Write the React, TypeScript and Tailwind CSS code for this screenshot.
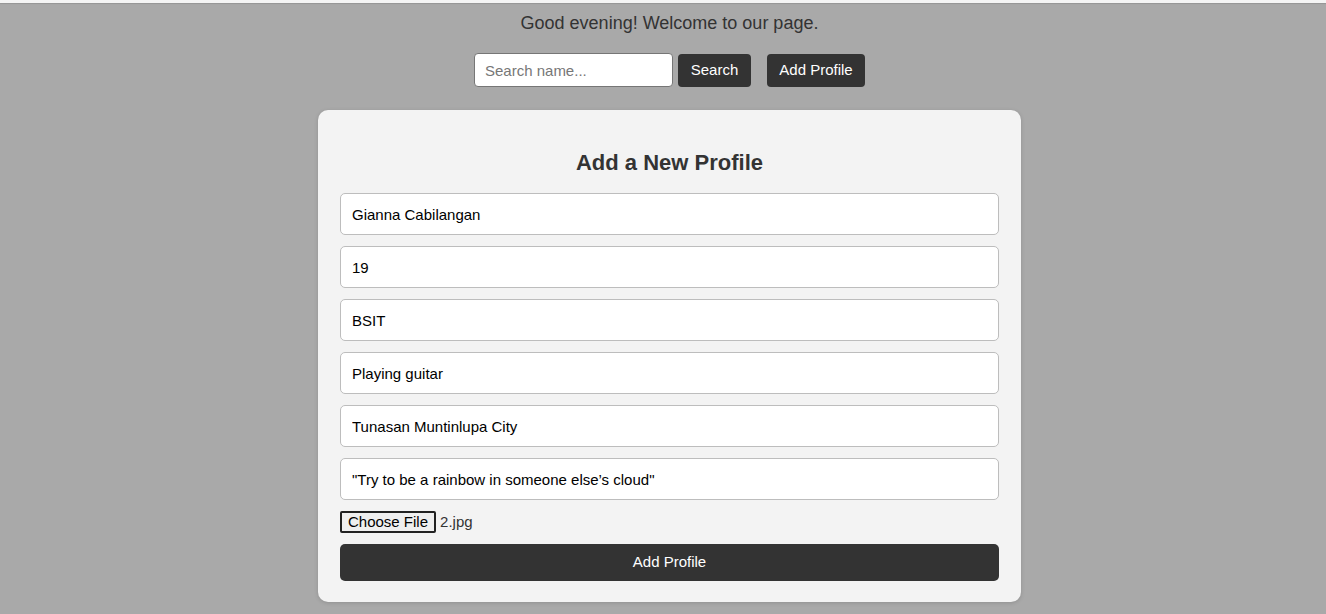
const fields = [
  'Gianna Cabilangan',
  '19',
  'BSIT',
  'Playing guitar',
  'Tunasan Muntinlupa City',
  '"Try to be a rainbow in someone else\u2019s cloud"',
];

export default function App() {
  return (
    <div className="min-h-[614px] bg-[#a9a9a9] font-['Liberation_Sans',Arial,sans-serif] text-[#333]">
      <div className="h-[3px] bg-[#f4f4f4] shadow-[0_1px_1px_rgba(0,0,0,0.12)]" />

      <div className="flex flex-col items-center pl-[13px]">
        {/* Greeting */}
        <p className="mt-[9px] text-[18px] leading-[22px] text-[#333]">
          Good evening! Welcome to our page.
        </p>

        {/* Search bar */}
        <div className="mt-[19px] flex items-center">
          <input
            placeholder="Search name..."
            className="h-[34px] w-[199px] rounded-[4px] border border-[#767676] bg-white px-[10px] text-[15px] text-[#333] outline-none placeholder:text-[#777]"
          />
          <button className="ml-[5px] h-[33px] w-[73px] rounded-[4px] bg-[#333] text-[15px] text-white">
            Search
          </button>
          <button className="ml-[16px] h-[33px] w-[98px] rounded-[4px] bg-[#333] text-[15px] text-white">
            Add Profile
          </button>
        </div>

        {/* Form card */}
        <div className="mt-[23px] w-[703px] rounded-[10px] bg-[#f3f3f3] px-[22px] pt-[40px] pb-[21px] shadow-[0_1px_4px_rgba(0,0,0,0.15)]">
          <h2 className="text-center text-[22px] font-bold leading-[26px] text-[#333]">
            Add a New Profile
          </h2>

          <div className="mt-[17px] flex flex-col gap-[11px]">
            {fields.map((value) => (
              <input
                key={value}
                defaultValue={value}
                className="h-[42px] w-full rounded-[5px] border border-[#bdbdbd] bg-white px-[11px] text-[15px] text-black outline-none"
              />
            ))}
          </div>

          {/* File picker */}
          <div className="mt-[11px] flex items-center text-[15px]">
            <span className="flex h-[22px] items-center rounded-[2px] border-2 border-[#222] bg-[#efefef] px-[6px] text-[15px] text-black">
              Choose File
            </span>
            <span className="ml-[4px] text-[#333]">2.jpg</span>
          </div>

          <button className="mt-[10px] h-[37px] w-full rounded-[5px] bg-[#333] text-[15px] text-white">
            Add Profile
          </button>
        </div>
      </div>
    </div>
  );
}
